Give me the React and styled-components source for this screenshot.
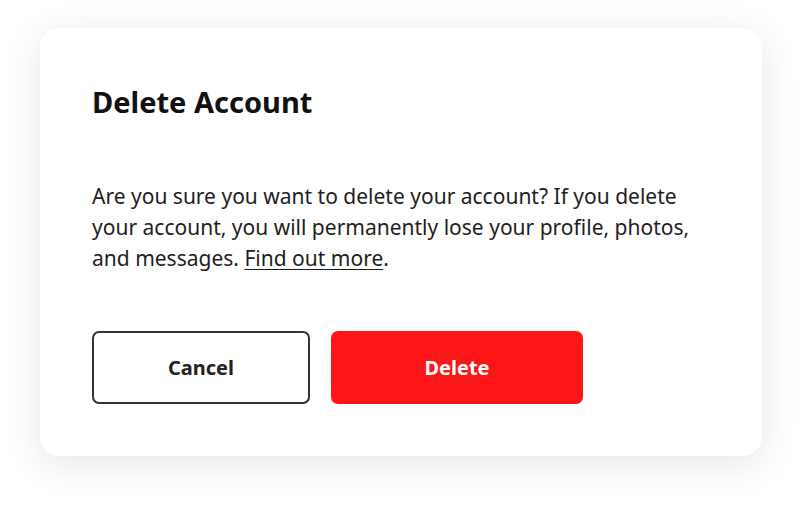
import React from "react";
import styled, { createGlobalStyle } from "styled-components";

const GlobalStyle = createGlobalStyle`
  html, body {
    margin: 0;
    padding: 0;
    background: #ffffff;
  }
  body {
    font-family: "Noto Sans", "Open Sans", Arial, sans-serif;
    -webkit-font-smoothing: antialiased;
  }
`;

const Page = styled.div`
  display: flex;
  align-items: flex-start;
  padding: 28px 38px 49px 40px;
`;

const Card = styled.section`
  width: 722px;
  box-sizing: border-box;
  padding: 56px 52px 52px 52px;
  background: #ffffff;
  border-radius: 20px;
  box-shadow: 0 8px 40px rgba(0, 0, 0, 0.1);
  display: flex;
  flex-direction: column;
`;

const Title = styled.h2`
  margin: 0;
  font-size: 29px;
  line-height: 36px;
  font-weight: 700;
  color: #111111;
`;

const Message = styled.p`
  margin: 61px 0 0;
  max-width: 612px;
  font-size: 21px;
  line-height: 31px;
  color: #1e1e1e;
  a {
    color: inherit;
    text-decoration: underline;
    text-underline-offset: 3px;
    text-decoration-thickness: 1px;
  }
`;

const Actions = styled.div`
  display: flex;
  gap: 21px;
  margin-top: 57px;
`;

const Button = styled.button`
  width: ${(p) => p.$width}px;
  height: 73px;
  box-sizing: border-box;
  border-radius: 7px;
  font-family: inherit;
  font-size: 20px;
  font-weight: 700;
  cursor: pointer;
  border: ${(p) => (p.$danger ? "none" : "2px solid #333333")};
  background: ${(p) => (p.$danger ? "#fd1517" : "#ffffff")};
  color: ${(p) => (p.$danger ? "#ffffff" : "#222222")};
`;

export default function App() {
  return (
    <>
      <GlobalStyle />
      <Page>
        <Card>
          <Title>Delete Account</Title>
          <Message>
            Are you sure you want to delete your account? If you delete your
            account, you will permanently lose your profile, photos, and
            messages. <a href="#more">Find out more</a>.
          </Message>
          <Actions>
            <Button $width={218}>Cancel</Button>
            <Button $width={252} $danger>
              Delete
            </Button>
          </Actions>
        </Card>
      </Page>
    </>
  );
}
